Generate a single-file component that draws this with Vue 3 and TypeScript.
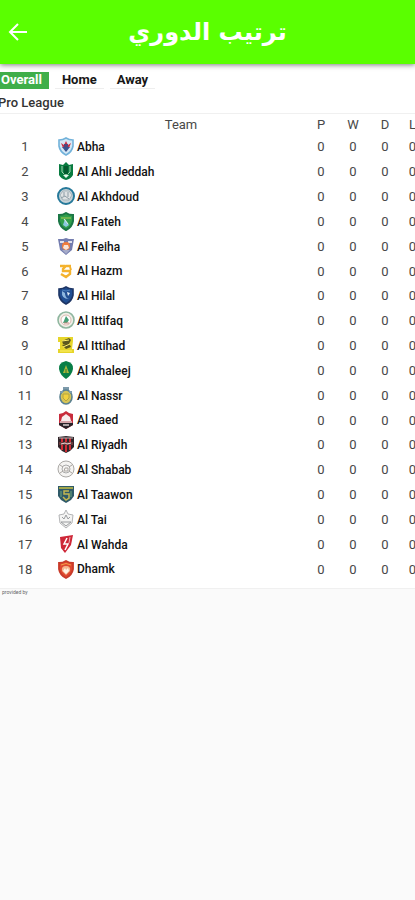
<script setup lang="ts">
import { ref } from 'vue'

type Shape = { d: string; fill?: string; stroke?: string; w?: number }
type Team = { name: string; crest: Shape[] }

const tabs: string[] = ['Overall', 'Home', 'Away']
const active = ref<string>('Overall')

const shield = 'M2 3Q6 3 9 1Q12 3 16 3V9Q15 15 9 18Q3 15 2 9Z'
const disc = 'M9 1A8 8 0 1 1 9 17A8 8 0 1 1 9 1Z'
const ring = 'M9 5A4 4 0 1 1 9 13A4 4 0 1 1 9 5Z'

const teams: Team[] = [
  { name: 'Abha', crest: [
    { d: shield, fill: '#d5e8f5', stroke: '#72b2da', w: 1.6 },
    { d: 'M4 6L7 8L9 4L11 8L14 6L12 11H6Z', fill: '#cf3145' },
    { d: 'M5 10H13L9 15Z', fill: '#39538e' },
    { d: 'M7 7H11V10H7Z', fill: '#53477e' },
  ] },
  { name: 'Al Ahli Jeddah', crest: [
    { d: 'M2 2L6 3L9 0L12 3L16 2V13Q14 17 9 18Q4 17 2 13Z', fill: '#087b40' },
    { d: 'M5 4V10Q9 15 13 10V4', stroke: '#a5d6b2', w: 1 },
    { d: 'M7 4H11V12H7Z', fill: '#05592e' },
    { d: 'M6 13H12L9 16Z', fill: '#e9f7ed' },
  ] },
  { name: 'Al Akhdoud', crest: [
    { d: disc, fill: '#c7d2d7', stroke: '#26799a', w: 2 },
    { d: 'M3 8L6 4H12L15 8L12 13H6Z', fill: '#dfe2e4', stroke: '#a5b4ba', w: 1 },
    { d: 'M4 11L8 9L12 12M7 5V9M11 5V10', stroke: '#8c9ca5', w: 1 },
  ] },
  { name: 'Al Fateh', crest: [
    { d: shield, fill: '#319f4b', stroke: '#1b7746', w: 2 },
    { d: 'M4 5H14V7H4Z', fill: '#6fb550' },
    { d: 'M6 13L8 7L12 13L9 15Z', fill: '#8bc8df' },
    { d: 'M7 7L11 12', stroke: '#e0eee0', w: 1 },
  ] },
  { name: 'Al Feiha', crest: [
    { d: 'M1 2H6L9 1L12 2H17L15 13L9 18L3 13Z', fill: '#747daf' },
    { d: 'M3 4H7V6H3ZM11 4H15V6H11Z', fill: '#dfe2ee' },
    { d: ring, fill: '#ef7c3c' },
    { d: 'M7 8H11L12 11L9 13L6 11Z', fill: '#f8e4d8' },
    { d: 'M5 13H13L9 17Z', fill: '#a6abc9' },
  ] },
  { name: 'Al Hazm', crest: [
    { d: 'M3 4H8M14 4H9L6 7V9H13V12L9 15L4 12', stroke: '#f4b22d', w: 2.4 },
    { d: 'M13 5L14 8', stroke: '#f4b22d', w: 2 },
  ] },
  { name: 'Al Hilal', crest: [
    { d: shield, fill: '#214f93', stroke: '#1d3565', w: 1.6 },
    { d: 'M5 5Q4 13 12 13Q8 12 8 7', fill: '#8fb8e0' },
    { d: 'M10 6L13 7L11 10Z', fill: '#e6f1fb' },
    { d: 'M5 4L9 5L13 4', stroke: '#4c7fbd', w: 1 },
  ] },
  { name: 'Al Ittifaq', crest: [
    { d: disc, fill: '#f1efe8', stroke: '#8fb69f', w: 1.6 },
    { d: 'M9 4A5 5 0 1 1 9 14A5 5 0 1 1 9 4Z', fill: '#fff', stroke: '#d9b9ae', w: 1 },
    { d: 'M6 12L9 5L12 9L10 12Z', fill: '#48a077' },
    { d: 'M7 12H12', stroke: '#c4847a', w: 1 },
  ] },
  { name: 'Al Ittihad', crest: [
    { d: 'M1 1H16V5L15 13H17V17H1V13H3V6H1Z', fill: '#e6d52a' },
    { d: 'M5 5L12 2L14 4L12 8H6ZM5 9L12 7L14 11L9 13Z', fill: '#5b591f' },
    { d: 'M5 5L12 4M6 11L13 8M3 15H15', stroke: '#fff16c', w: 1 },
  ] },
  { name: 'Al Khaleej', crest: [
    { d: 'M9 0Q17 2 16 8Q15 14 9 18Q3 14 2 8Q1 2 9 0Z', fill: '#087e46' },
    { d: 'M9 4L12 12H6Z', fill: '#a9b83b' },
    { d: 'M9 8V12', stroke: '#38752f', w: 1 },
  ] },
  { name: 'Al Nassr', crest: [
    { d: 'M6 1H12V5H6Z', fill: '#7d9aab' },
    { d: 'M9 4A6 7 0 1 1 9 18A6 7 0 1 1 9 4Z', fill: '#d6c557', stroke: '#5a8191', w: 1.6 },
    { d: 'M6 8H12V12L9 15L6 12Z', fill: '#f1d13f', stroke: '#b5a43f', w: 1 },
    { d: 'M3 6H6M12 6H15', stroke: '#7c9daf', w: 2 },
  ] },
  { name: 'Al Raed', crest: [
    { d: 'M2 3L6 2L9 0L12 2L16 3V14L9 18L2 14Z', fill: '#c82c3c' },
    { d: 'M2 12H16V14L9 18L2 14Z', fill: '#282329' },
    { d: 'M4 10L5 6L9 3L13 6L14 10Z', fill: '#f7eeee' },
    { d: 'M3 11H15M6 14H12', stroke: '#d8cdcd', w: 1.4 },
  ] },
  { name: 'Al Riyadh', crest: [
    { d: 'M1 2L9 1L17 2V12Q14 16 9 18Q4 16 1 12Z', fill: '#302429' },
    { d: 'M4 3H6V15H4ZM8 3H10V17H8ZM12 3H14V15H12Z', fill: '#cf2c34' },
    { d: 'M2 7H16V10H2Z', fill: '#6c393b' },
    { d: 'M4 9L8 8L10 9L14 8', stroke: '#f0dddd', w: 1 },
    { d: 'M2 3H16', stroke: '#bdb5b7', w: 1 },
  ] },
  { name: 'Al Shabab', crest: [
    { d: disc, fill: '#f5f4f2', stroke: '#aaa8a5', w: 1 },
    { d: ring, stroke: '#aaa', w: 1 },
    { d: 'M3 5L6 7M12 11L15 13M3 13L6 11M12 7L15 5M8 8H11V11H7Z', stroke: '#aaa5a0', w: 1 },
  ] },
  { name: 'Al Taawon', crest: [
    { d: 'M1 1H17V11L14 15L9 18L4 15L1 11Z', fill: '#2f5a68' },
    { d: 'M2 2H16V4H2Z', fill: '#a1a64b' },
    { d: 'M12 6H7V9H12V13L9 15L6 12', stroke: '#c4b850', w: 1.5 },
    { d: 'M4 6V12M14 6V12', stroke: '#4e8172', w: 2 },
  ] },
  { name: 'Al Tai', crest: [
    { d: 'M7 4L9 0L11 4L16 5L15 13L9 18L3 13L2 5Z', fill: '#f4f4f3', stroke: '#b3b4b6', w: 1 },
    { d: 'M5 7L7 9L9 5L11 9L13 7M4 12H14L9 16Z', stroke: '#9a9c9f', w: 1 },
  ] },
  { name: 'Al Wahda', crest: [
    { d: 'M3 2L16 0L14 10L8 18L4 13Z', fill: '#ce2738' },
    { d: 'M10 3L7 9H11L8 15', stroke: '#fff', w: 1.5 },
    { d: 'M13 2L12 8', stroke: '#efb4b7', w: 1 },
  ] },
  { name: 'Dhamk', crest: [
    { d: shield, fill: '#df4930', stroke: '#c83a29', w: 1.8 },
    { d: 'M5 11Q4 6 9 6Q14 6 13 11L9 15Z', fill: '#f5b68f' },
    { d: 'M6 11L8 8L9 10L11 8L12 11L9 14Z', fill: '#fff3e6' },
    { d: 'M4 5Q9 2 14 5', stroke: '#f4a247', w: 1 },
  ] },
]
const stats: string[] = ['P', 'W', 'D', 'L']
</script>

<template>
  <header class="bar">
    <button class="back" type="button" aria-label="Back">
      <svg viewBox="0 0 20 20" aria-hidden="true"><path d="M19 10H2M10 2L2 10L10 18" /></svg>
    </button>
    <h1 lang="ar" dir="rtl">ترتيب الدوري</h1>
  </header>
  <main>
    <section class="standings">
      <nav class="tabs">
        <button v-for="tab in tabs" :key="tab" type="button" :class="{ active: active === tab }" @click="active = tab">{{ tab }}</button>
      </nav>
      <h2>Pro League</h2>
      <table>
        <colgroup>
          <col class="rank-col"><col><col class="stat-col"><col class="stat-col"><col class="stat-col"><col class="last-col">
        </colgroup>
        <thead>
          <tr><th></th><th scope="col">Team</th><th v-for="s in stats" :key="s" scope="col">{{ s }}</th></tr>
        </thead>
        <tbody>
          <tr v-for="(team, i) in teams" :key="team.name">
            <td>{{ i + 1 }}</td>
            <td>
              <div class="team">
                <svg viewBox="0 0 18 19" aria-hidden="true">
                  <path v-for="(p, n) in team.crest" :key="n" :d="p.d" :fill="p.fill ?? 'none'" :stroke="p.stroke ?? 'none'" :stroke-width="p.w ?? 0" />
                </svg>
                <span>{{ team.name }}</span>
              </div>
            </td>
            <td v-for="s in stats" :key="s">0</td>
          </tr>
        </tbody>
      </table>
    </section>
    <footer>provided by</footer>
  </main>
</template>

<style>
body {
  background: #fafafa;
}
</style>

<style scoped>
.bar {
  position: relative;
  display: grid;
  grid-template-columns: 36px 1fr 36px;
  align-items: center;
  height: 64px;
  background: #5aff00;
  box-shadow: 0 1px 5px rgba(0, 0, 0, 0.5);
}
.back {
  display: flex;
  justify-content: center;
  padding: 0;
  border: 0;
  background: none;
}
.back svg {
  width: 20px;
  height: 20px;
  fill: none;
  stroke: #fff;
  stroke-width: 2;
}
h1 {
  margin: 0;
  color: #fff;
  font: bold 24px/36px "DejaVu Sans", sans-serif;
  text-align: center;
}
main {
  overflow: hidden;
  font-family: Roboto, sans-serif;
}
.standings {
  padding-top: 8px;
  padding-bottom: 7px;
  background: #fff;
  border-bottom: 1px solid #f0f0f0;
}
.tabs {
  display: flex;
  gap: 6px;
}
.tabs button {
  height: 17px;
  padding: 0 7px;
  border: 0;
  border-bottom: 1px solid #eee;
  background: #fff;
  color: #161616;
  font: bold 13px/16px Roboto, sans-serif;
}
.tabs .active {
  padding-left: 1px;
  border-color: #3fae49;
  background: #3fae49;
  color: #fff;
}
h2 {
  margin: 0 0 0 -2px;
  padding: 6px 0 2px;
  color: #333;
  font-size: 13px;
  font-weight: 500;
  line-height: 16px;
}
table {
  width: calc(100% + 16px);
  margin-left: -7px;
  border-collapse: collapse;
  border-top: 1px solid #f0f0f0;
  table-layout: fixed;
  color: #484848;
  font-size: 13px;
}
.rank-col {
  width: 64px;
}
.stat-col {
  width: 32px;
}
.last-col {
  width: 23px;
}
th,
td {
  height: 25px;
  padding: 0;
  font-weight: 400;
  text-align: center;
}
th {
  height: 20px;
}
tbody tr:nth-child(6n) td {
  height: 24px;
}
.team {
  display: flex;
  align-items: center;
  gap: 2px;
  color: #111;
  font-size: 12px;
  font-weight: 500;
}
.team svg {
  width: 18px;
  height: 19px;
}
footer {
  padding: 0 2px;
  color: #666;
  font-size: 5px;
  line-height: 6px;
}
</style>
